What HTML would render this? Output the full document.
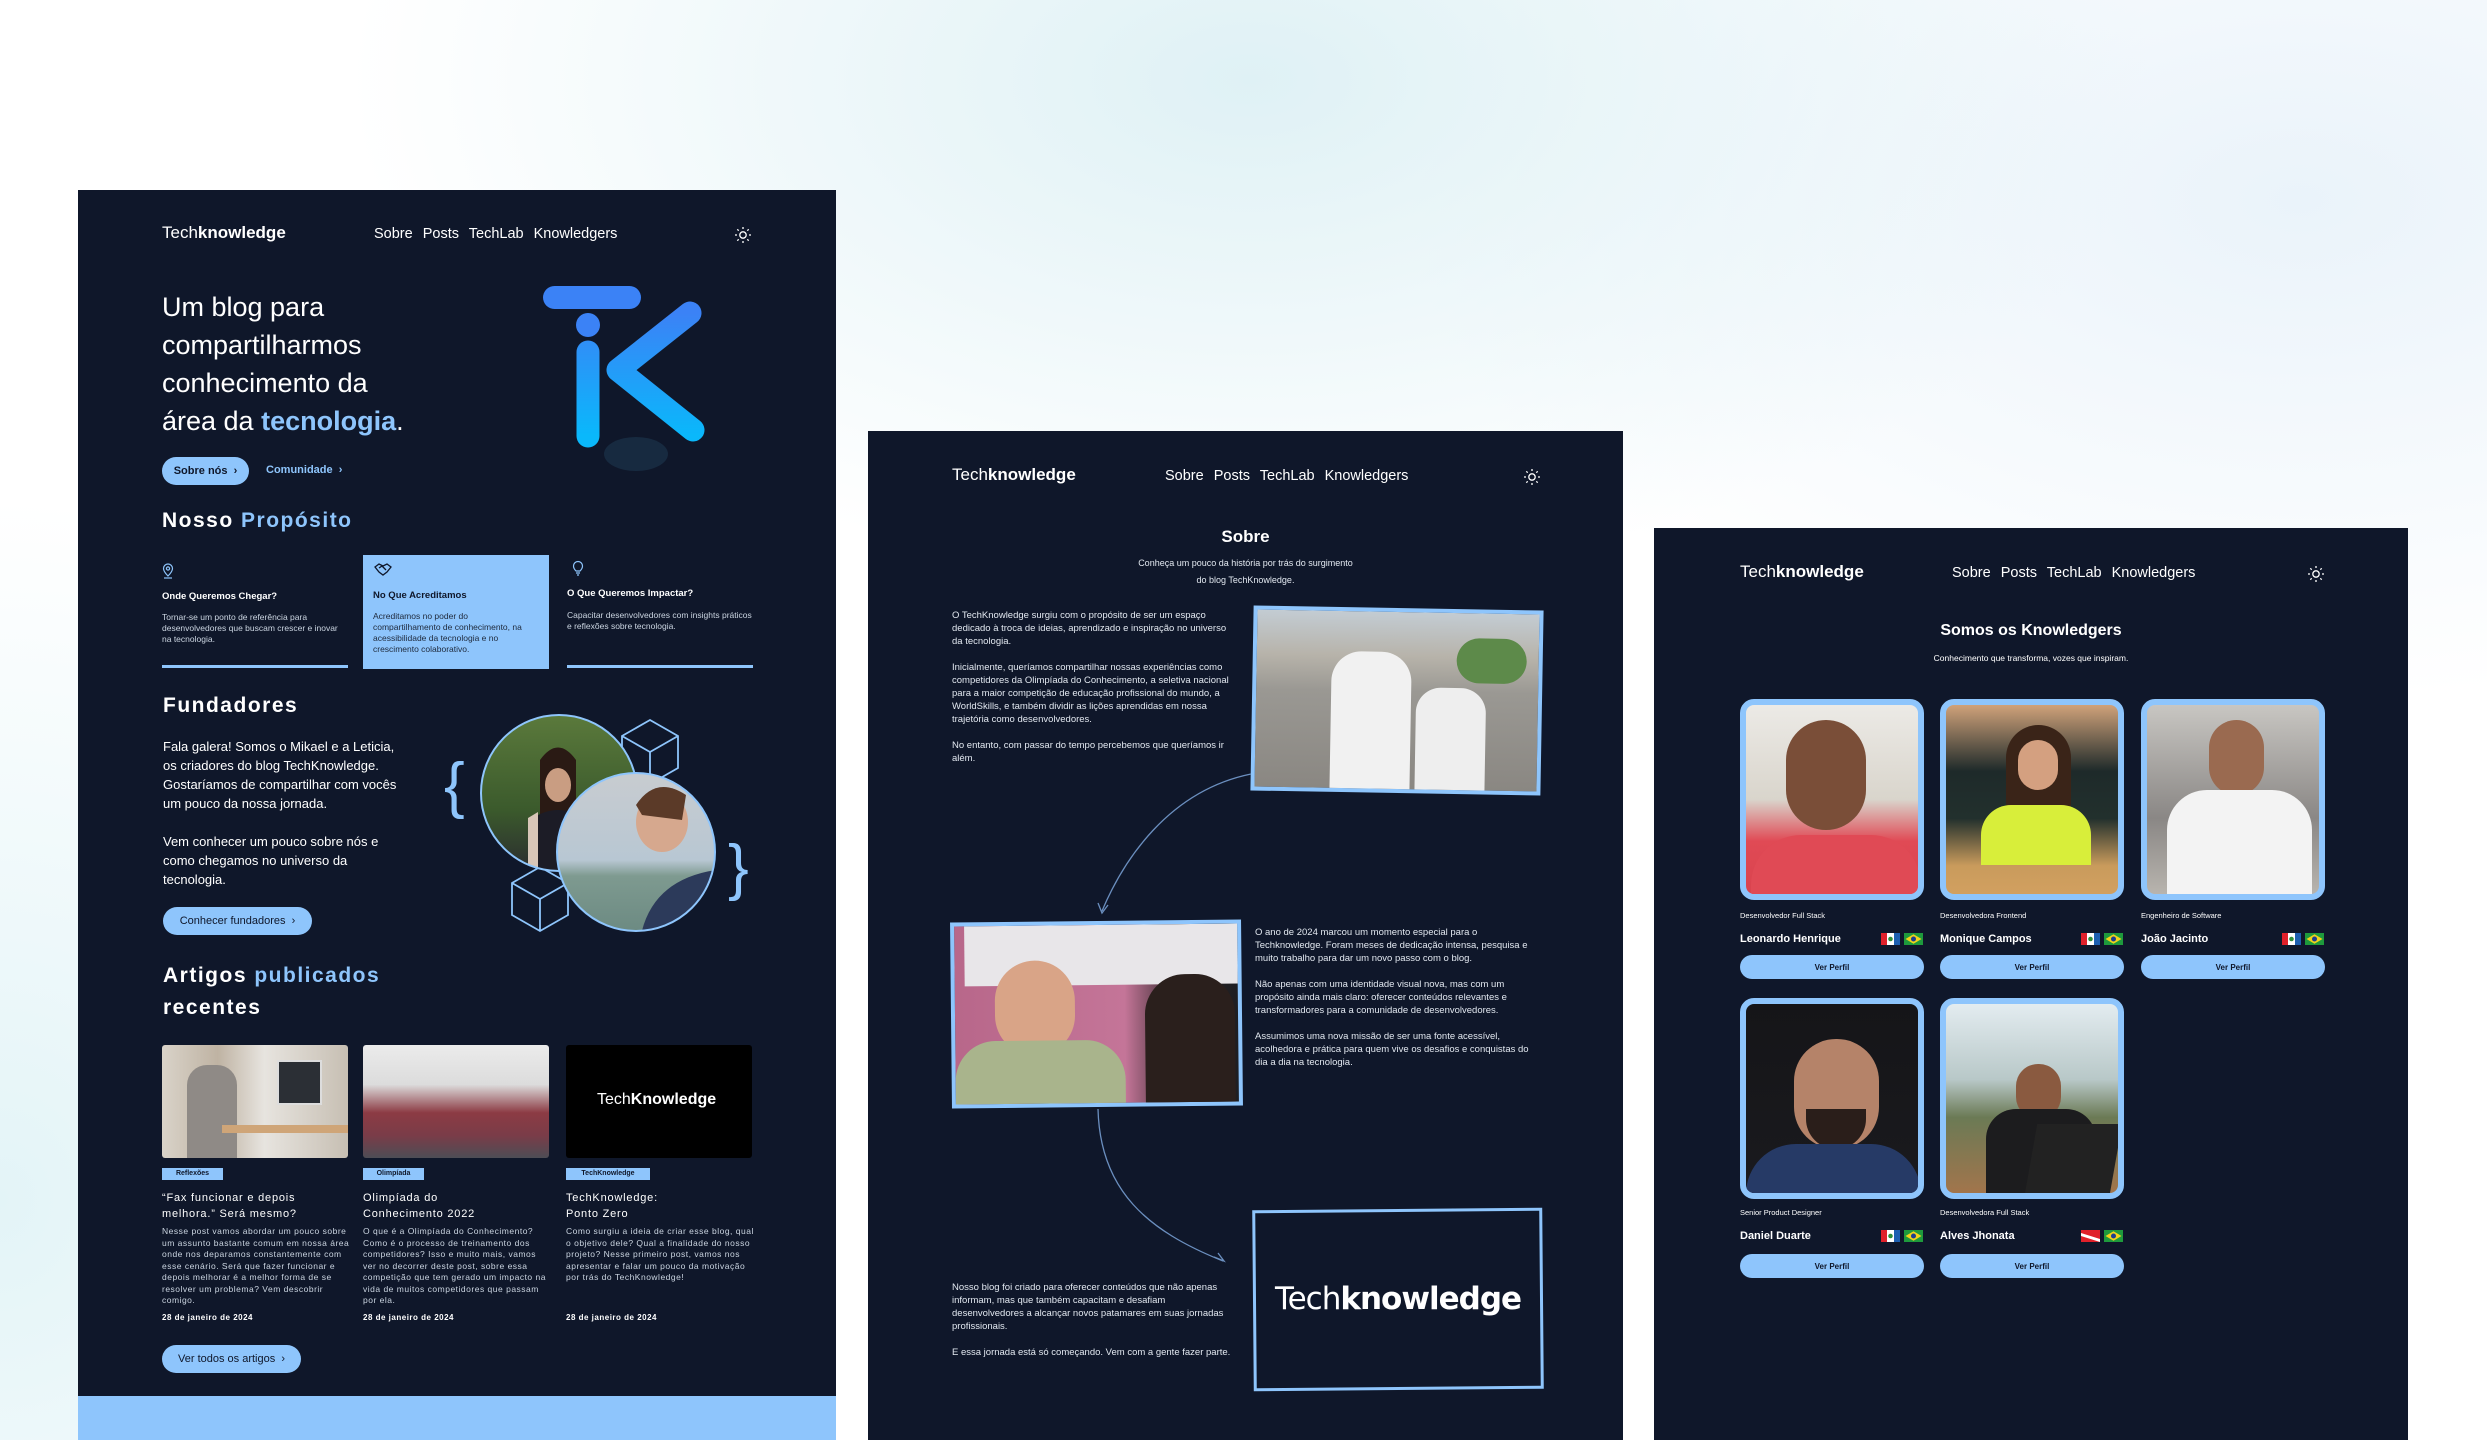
<!DOCTYPE html>
<html><head><meta charset="utf-8">
<style>
*{margin:0;padding:0;box-sizing:border-box}
body{width:2487px;height:1440px;overflow:hidden;position:relative;font-family:"Liberation Sans",sans-serif;
background:radial-gradient(ellipse 900px 500px at 1250px 80px,#dff1f5,rgba(223,241,245,0) 100%),radial-gradient(ellipse 600px 700px at 0px 1200px,#e3f4f7,rgba(227,244,247,0)),radial-gradient(ellipse 900px 500px at 2300px 200px,#eaf3fa,rgba(234,243,250,0)),#ffffff;}
.p{position:absolute;background:#0f172a;overflow:hidden}
.a{position:absolute;white-space:nowrap}
.w{color:#fff}
.b{color:#8ec5fc}
.logo{font-size:17px;color:#fff}
.logo b{font-weight:bold}
.nav{font-size:14.5px;color:#fff;word-spacing:6px}
.btn{position:absolute;background:#8ec5fc;color:#0f172a;border-radius:20px;font-size:11px;display:flex;align-items:center;justify-content:center}
.sm{font-size:8.5px;line-height:11px;color:#cbd5e1;white-space:normal}
.ph{position:absolute;overflow:hidden}
</style></head><body>

<!-- PANEL 1 -->
<div class="p" style="left:78px;top:190px;width:758px;height:1250px">
<div class="a logo" style="left:84px;top:33px">Tech<b>knowledge</b></div>
<div class="a nav" style="left:296px;top:36px">Sobre Posts TechLab Knowledgers</div>
<svg class="a" style="left:656px;top:36px" width="18" height="18" viewBox="0 0 18 18" fill="none" stroke="#fff" stroke-width="1.3"><circle cx="9" cy="9" r="3.2"/><path d="M9 1v2M9 15v2M1 9h2M15 9h2M3.3 3.3l1.4 1.4M13.3 13.3l1.4 1.4M3.3 14.7l1.4-1.4M13.3 4.7l1.4-1.4"/></svg>
<div class="a w" style="left:84px;top:98px;font-size:27px;line-height:38px;white-space:normal;width:255px">Um blog para compartilharmos conhecimento da área da <b class="b">tecnologia</b>.</div>
<div class="btn" style="left:84px;top:267px;width:87px;height:28px;font-weight:bold">Sobre nós &nbsp;›</div>
<div class="a b" style="left:188px;top:274px;font-size:11px;font-weight:bold">Comunidade &nbsp;›</div>
<div class="a w" style="left:84px;top:319px;font-size:21px;font-weight:bold;letter-spacing:1.5px">Nosso <span class="b">Propósito</span></div>
<!-- cards -->
<div class="a" style="left:285px;top:365px;width:186px;height:114px;background:#8ec5fc"></div>
<div class="a" style="left:84px;top:475px;width:186px;height:3px;background:#8ec5fc"></div>
<div class="a" style="left:489px;top:475px;width:186px;height:3px;background:#8ec5fc"></div>
<svg class="a" style="left:84px;top:373px" width="12" height="16" viewBox="0 0 12 16" fill="none" stroke="#8ec5fc" stroke-width="1.2"><path d="M6 13C2 9 1.5 7 1.5 5.5a4.5 4.5 0 019 0C10.5 7 10 9 6 13z"/><circle cx="6" cy="5.5" r="1.6"/><path d="M2 15h8"/></svg>
<svg class="a" style="left:296px;top:372px" width="18" height="14" viewBox="0 0 18 14" fill="none" stroke="#0f172a" stroke-width="1.3"><path d="M1 5l4-3 4 2 4-2 4 3-4 5-4 3-4-3z M5 6l3-2 4 4"/></svg>
<svg class="a" style="left:494px;top:370px" width="12" height="16" viewBox="0 0 12 16" fill="none" stroke="#8ec5fc" stroke-width="1.2"><path d="M4 11C2.5 9.5 1.5 8 1.5 6a4.5 4.5 0 019 0c0 2-1 3.5-2.5 5zM4 13h4M5 15h2"/></svg>
<div class="a w" style="left:84px;top:401px;font-size:9.5px;font-weight:bold">Onde Queremos Chegar?</div>
<div class="a sm" style="left:84px;top:422px;width:186px">Tornar-se um ponto de referência para desenvolvedores que buscam crescer e inovar na tecnologia.</div>
<div class="a" style="left:295px;top:400px;font-size:9.5px;font-weight:bold;color:#0f172a">No Que Acreditamos</div>
<div class="a sm" style="left:295px;top:421px;width:160px;color:#1e293b">Acreditamos no poder do compartilhamento de conhecimento, na acessibilidade da tecnologia e no crescimento colaborativo.</div>
<div class="a w" style="left:489px;top:398px;font-size:9.5px;font-weight:bold">O Que Queremos Impactar?</div>
<div class="a sm" style="left:489px;top:420px;width:190px">Capacitar desenvolvedores com insights práticos e reflexões sobre tecnologia.</div>
<div class="a w" style="left:85px;top:504px;font-size:21px;font-weight:bold;letter-spacing:1.5px">Fundadores</div>
<div class="a w" style="left:85px;top:547px;font-size:13px;line-height:19px;white-space:normal;width:245px">Fala galera! Somos o Mikael e a Leticia, os criadores do blog TechKnowledge. Gostaríamos de compartilhar com vocês um pouco da nossa jornada.<br><br>Vem conhecer um pouco sobre nós e como chegamos no universo da tecnologia.</div>
<div class="btn" style="left:85px;top:717px;width:149px;height:28px">Conhecer fundadores &nbsp;›</div>
<div class="a w" style="left:85px;top:770px;font-size:21px;font-weight:bold;letter-spacing:1.5px;line-height:32px">Artigos <span class="b">publicados</span><br>recentes</div>
<!-- articles -->
<div class="ph" style="left:84px;top:855px;width:186px;height:113px;border-radius:3px;background:linear-gradient(90deg,#d9d3c9 0%,#bfb3a3 30%,#e7e4df 55%,#c7bfb3 100%)"><div style="position:absolute;left:115px;top:15px;width:45px;height:45px;background:#2b2f35;border:2px solid #ddd"></div><div style="position:absolute;left:25px;top:20px;width:50px;height:93px;background:#8f8a86;border-radius:20px 20px 0 0"></div><div style="position:absolute;left:60px;top:80px;width:126px;height:8px;background:#cfa578"></div></div>
<div class="ph" style="left:285px;top:855px;width:186px;height:113px;border-radius:3px;background:linear-gradient(180deg,#ebebeb 0%,#dcdcdc 35%,#8c3b44 60%,#7a3c48 80%,#4d4d55 100%)"></div>
<div class="ph" style="left:488px;top:855px;width:186px;height:113px;border-radius:3px;background:#000"><div class="a w" style="left:31px;top:46px;font-size:16px">Tech<b>Knowledge</b></div></div>
<div class="a" style="left:84px;top:978px;width:61px;height:12px;background:#8ec5fc;font-size:7px;font-weight:bold;color:#0f172a;text-align:center;line-height:12px">Reflexões</div>
<div class="a" style="left:285px;top:978px;width:61px;height:12px;background:#8ec5fc;font-size:7px;font-weight:bold;color:#0f172a;text-align:center;line-height:12px">Olimpíada</div>
<div class="a" style="left:488px;top:978px;width:84px;height:12px;background:#8ec5fc;font-size:7px;font-weight:bold;color:#0f172a;text-align:center;line-height:12px">TechKnowledge</div>
<div class="a w" style="left:84px;top:1000px;font-size:11px;line-height:16px;letter-spacing:.8px">“Fax funcionar e depois<br>melhora.” Será mesmo?</div>
<div class="a w" style="left:285px;top:1000px;font-size:11px;line-height:16px;letter-spacing:.8px">Olimpíada do<br>Conhecimento 2022</div>
<div class="a w" style="left:488px;top:1000px;font-size:11px;line-height:16px;letter-spacing:.8px">TechKnowledge:<br>Ponto Zero</div>
<div class="a sm" style="left:84px;top:1036px;width:188px;line-height:11.5px;letter-spacing:.5px">Nesse post vamos abordar um pouco sobre um assunto bastante comum em nossa área onde nos deparamos constantemente com esse cenário. Será que fazer funcionar e depois melhorar é a melhor forma de se resolver um problema? Vem descobrir comigo.</div>
<div class="a sm" style="left:285px;top:1036px;width:188px;line-height:11.5px;letter-spacing:.5px">O que é a Olimpíada do Conhecimento? Como é o processo de treinamento dos competidores? Isso e muito mais, vamos ver no decorrer deste post, sobre essa competição que tem gerado um impacto na vida de muitos competidores que passam por ela.</div>
<div class="a sm" style="left:488px;top:1036px;width:190px;line-height:11.5px;letter-spacing:.5px">Como surgiu a ideia de criar esse blog, qual o objetivo dele? Qual a finalidade do nosso projeto? Nesse primeiro post, vamos nos apresentar e falar um pouco da motivação por trás do TechKnowledge!</div>
<div class="a w" style="left:84px;top:1123px;font-size:8px;font-weight:bold;letter-spacing:.5px">28 de janeiro de 2024</div>
<div class="a w" style="left:285px;top:1123px;font-size:8px;font-weight:bold;letter-spacing:.5px">28 de janeiro de 2024</div>
<div class="a w" style="left:488px;top:1123px;font-size:8px;font-weight:bold;letter-spacing:.5px">28 de janeiro de 2024</div>
<div class="btn" style="left:84px;top:1155px;width:139px;height:28px">Ver todos os artigos &nbsp;›</div>
<div class="a" style="left:0;top:1206px;width:758px;height:44px;background:#8ec5fc"></div>
</div>

<!-- TK logo + founders (page coords) -->
<svg class="a" style="left:0;top:0" width="840" height="1000">
<defs><linearGradient id="g" x1="0" y1="0" x2="0" y2="1"><stop offset="0" stop-color="#3b82f6"/><stop offset="1" stop-color="#0ab8fb"/></linearGradient>
<clipPath id="c1"><circle cx="559" cy="793" r="78"/></clipPath><clipPath id="c2"><circle cx="636" cy="852" r="79"/></clipPath>
<linearGradient id="f1" x1="0" y1="0" x2="0" y2="1"><stop offset="0" stop-color="#5b7a3c"/><stop offset=".6" stop-color="#3b5a2c"/><stop offset="1" stop-color="#2a2a30"/></linearGradient>
<linearGradient id="f2" x1="0" y1="0" x2="0" y2="1"><stop offset="0" stop-color="#c8ccd0"/><stop offset=".55" stop-color="#b8c7d3"/><stop offset=".65" stop-color="#7e9a90"/><stop offset="1" stop-color="#6c8a82"/></linearGradient></defs>
<ellipse cx="636" cy="454" rx="32" ry="17" fill="#172a40"/>
<rect x="543" y="286" width="98" height="23" rx="11.5" fill="#3b82f6"/>
<circle cx="588" cy="325" r="12" fill="#3b82f6"/>
<path d="M588 352V436M690 313L618 370L693 430" stroke="url(#g)" stroke-width="23" stroke-linecap="round" stroke-linejoin="round" fill="none"/>
<g fill="none" stroke="#8ec5fc" stroke-width="1.8">
<path d="M650 720l28 16v32l-28 16-28-16v-32zM622 736l28 16 28-16M650 752v32"/>
<path d="M540 867l28 16v32l-28 16-28-16v-32zM512 883l28 16 28-16M540 899v32"/>
</g>
<g clip-path="url(#c1)"><rect x="480" y="714" width="160" height="160" fill="url(#f1)"/><path d="M540 760q18-25 36 0v60h-36z" fill="#2a1a14"/><ellipse cx="558" cy="785" rx="13" ry="17" fill="#c99d82"/><path d="M530 880v-60q28-20 56 0v60z" fill="#1c1c26"/><path d="M528 880v-62l10-6v68z" fill="#d8c6b8"/></g>
<circle cx="559" cy="793" r="78" fill="none" stroke="#8ec5fc" stroke-width="2"/>
<g clip-path="url(#c2)"><rect x="556" y="772" width="160" height="160" fill="url(#f2)"/><ellipse cx="662" cy="822" rx="26" ry="30" fill="#d6a88e"/><path d="M636 805q20-30 50-10l-4 25-40 -5z" fill="#5b3a28"/><path d="M640 940q10-60 76-70v70z" fill="#2c3a5a"/></g>
<circle cx="636" cy="852" r="79" fill="none" stroke="#8ec5fc" stroke-width="2"/>
<text x="444" y="806" font-size="62" fill="#8ec5fc" font-family="Liberation Sans">{</text>
<text x="728" y="888" font-size="62" fill="#8ec5fc" font-family="Liberation Sans">}</text>
</svg>

<!-- PANEL 2 -->
<div class="p" style="left:868px;top:431px;width:755px;height:1009px">
<div class="a logo" style="left:84px;top:34px">Tech<b>knowledge</b></div>
<div class="a nav" style="left:297px;top:37px">Sobre Posts TechLab Knowledgers</div>
<svg class="a" style="left:655px;top:37px" width="18" height="18" viewBox="0 0 18 18" fill="none" stroke="#fff" stroke-width="1.3"><circle cx="9" cy="9" r="3.2"/><path d="M9 1v2M9 15v2M1 9h2M15 9h2M3.3 3.3l1.4 1.4M13.3 13.3l1.4 1.4M3.3 14.7l1.4-1.4M13.3 4.7l1.4-1.4"/></svg>
<div class="a w" style="left:0;width:755px;text-align:center;top:96px;font-size:17px;font-weight:bold">Sobre</div>
<div class="a" style="left:0;width:755px;text-align:center;top:124px;font-size:9px;line-height:17px;color:#e2e8f0">Conheça um pouco da história por trás do surgimento<br>do blog TechKnowledge.</div>
<div class="a sm" style="left:84px;top:178px;width:285px;font-size:9.5px;line-height:13px;color:#e2e8f0">O TechKnowledge surgiu com o propósito de ser um espaço dedicado à troca de ideias, aprendizado e inspiração no universo da tecnologia.<br><br>Inicialmente, queríamos compartilhar nossas experiências como competidores da Olimpíada do Conhecimento, a seletiva nacional para a maior competição de educação profissional do mundo, a WorldSkills, e também dividir as lições aprendidas em nossa trajetória como desenvolvedores.<br><br>No entanto, com passar do tempo percebemos que queríamos ir além.</div>
<div class="ph" style="left:384px;top:177px;width:290px;height:185px;border:4px solid #8ec5fc;transform:rotate(1deg);background:linear-gradient(180deg,#c3ccd3 0%,#b7b3aa 25%,#9a9893 45%,#8a8782 100%)"><div style="position:absolute;left:75px;top:40px;width:80px;height:140px;background:#f1f1f1;border-radius:30px 30px 0 0"></div><div style="position:absolute;left:160px;top:75px;width:70px;height:110px;background:#eeeeee;border-radius:25px 25px 0 0"></div><div style="position:absolute;left:200px;top:25px;width:70px;height:45px;background:#5d8a4a;border-radius:30px"></div></div>
<div class="a sm" style="left:387px;top:495px;width:285px;font-size:9.5px;line-height:13px;color:#e2e8f0">O ano de 2024 marcou um momento especial para o Techknowledge. Foram meses de dedicação intensa, pesquisa e muito trabalho para dar um novo passo com o blog.<br><br>Não apenas com uma identidade visual nova, mas com um propósito ainda mais claro: oferecer conteúdos relevantes e transformadores para a comunidade de desenvolvedores.<br><br>Assumimos uma nova missão de ser uma fonte acessível, acolhedora e prática para quem vive os desafios e conquistas do dia a dia na tecnologia.</div>
<div class="ph" style="left:83px;top:490px;width:291px;height:186px;border:4px solid #8ec5fc;transform:rotate(-0.6deg);background:linear-gradient(90deg,#b8678a 0%,#c47598 60%,#2a2426 80%,#1e1e22 100%)"><div style="position:absolute;left:10px;top:0;width:280px;height:60px;background:#e8e6e9"></div><div style="position:absolute;left:40px;top:35px;width:80px;height:95px;background:#d9a487;border-radius:40px"></div><div style="position:absolute;left:0;top:115px;width:170px;height:75px;background:#a9b48c;border-radius:40px 40px 0 0"></div><div style="position:absolute;left:190px;top:50px;width:90px;height:140px;background:#2a1f1c;border-radius:40px 40px 0 0"></div></div>
<svg class="a" style="left:0;top:0" width="755" height="1009" fill="none" stroke="#6b8fbf" stroke-width="1.3"><path d="M383 343C300 360 255 430 234 480"/><path d="M230 472l4 10 6-8"/><path d="M230 678C232 760 280 800 355 830"/><path d="M346 826l10 4-6 -8"/></svg>
<div class="a sm" style="left:84px;top:850px;width:285px;font-size:9.5px;line-height:13px;color:#e2e8f0">Nosso blog foi criado para oferecer conteúdos que não apenas informam, mas que também capacitam e desafiam desenvolvedores a alcançar novos patamares em suas jornadas profissionais.<br><br>E essa jornada está só começando. Vem com a gente fazer parte.</div>
<div class="a" style="left:385px;top:778px;width:290px;height:181px;border:3px solid #8ec5fc;transform:rotate(-0.5deg)"></div>
<div class="a w" style="left:385px;top:850px;width:290px;text-align:center;font-size:31px;font-family:'DejaVu Sans',sans-serif;letter-spacing:-1px">Tech<b>knowledge</b></div>
</div>

<!-- PANEL 3 -->
<div class="p" style="left:1654px;top:528px;width:754px;height:912px">
<div class="a logo" style="left:86px;top:34px">Tech<b>knowledge</b></div>
<div class="a nav" style="left:298px;top:37px">Sobre Posts TechLab Knowledgers</div>
<svg class="a" style="left:653px;top:37px" width="18" height="18" viewBox="0 0 18 18" fill="none" stroke="#fff" stroke-width="1.3"><circle cx="9" cy="9" r="3.2"/><path d="M9 1v2M9 15v2M1 9h2M15 9h2M3.3 3.3l1.4 1.4M13.3 13.3l1.4 1.4M3.3 14.7l1.4-1.4M13.3 4.7l1.4-1.4"/></svg>
<div class="a w" style="left:0;width:754px;text-align:center;top:94px;font-size:16px;font-weight:bold">Somos os Knowledgers</div>
<div class="a w" style="left:0;width:754px;text-align:center;top:125px;font-size:8.5px">Conhecimento que transforma, vozes que inspiram.</div>

<!-- row1 -->
<div class="ph" style="left:86px;top:171px;width:184px;height:201px;border:6px solid #8ec5fc;border-radius:14px;background:linear-gradient(180deg,#eceae6 0%,#d9d5cc 50%,#e04a55 72%,#d9434e 100%)"><div style="position:absolute;left:40px;top:15px;width:80px;height:110px;background:#7a4e38;border-radius:40px"></div><div style="position:absolute;left:5px;top:130px;width:170px;height:70px;background:#e04a55;border-radius:50px 50px 0 0"></div></div>
<div class="ph" style="left:286px;top:171px;width:184px;height:201px;border:6px solid #8ec5fc;border-radius:14px;background:linear-gradient(180deg,#d0a27a 0%,#1e2a2a 35%,#22302d 60%,#c99b5c 85%,#d2a060 100%)"><div style="position:absolute;left:60px;top:20px;width:65px;height:110px;background:#3a2418;border-radius:35px"></div><div style="position:absolute;left:72px;top:35px;width:40px;height:50px;background:#d4a080;border-radius:20px"></div><div style="position:absolute;left:35px;top:100px;width:110px;height:60px;background:#d8ee3a;border-radius:30px 30px 0 0"></div></div>
<div class="ph" style="left:487px;top:171px;width:184px;height:201px;border:6px solid #8ec5fc;border-radius:14px;background:linear-gradient(180deg,#c8c6c2 0%,#8a8785 60%,#b8b4ae 100%)"><div style="position:absolute;left:62px;top:15px;width:55px;height:75px;background:#9a6a50;border-radius:28px"></div><div style="position:absolute;left:20px;top:85px;width:145px;height:110px;background:#f3f3f3;border-radius:40px 40px 0 0"></div></div>
<div class="a w" style="left:86px;top:383px;font-size:7.5px">Desenvolvedor Full Stack</div>
<div class="a w" style="left:286px;top:383px;font-size:7.5px">Desenvolvedora Frontend</div>
<div class="a w" style="left:487px;top:383px;font-size:7.5px">Engenheiro de Software</div>
<div class="a w" style="left:86px;top:405px;font-size:11px;font-weight:bold">Leonardo Henrique</div>
<div class="a w" style="left:286px;top:405px;font-size:11px;font-weight:bold">Monique Campos</div>
<div class="a w" style="left:487px;top:405px;font-size:11px;font-weight:bold">João Jacinto</div>

<!-- row2 -->
<div class="ph" style="left:86px;top:470px;width:184px;height:201px;border:6px solid #8ec5fc;border-radius:14px;background:linear-gradient(180deg,#151518 0%,#1a1a1e 100%)"><div style="position:absolute;left:48px;top:35px;width:85px;height:110px;background:#b58369;border-radius:42px"></div><div style="position:absolute;left:60px;top:105px;width:60px;height:40px;background:#2a1e1a;border-radius:0 0 30px 30px"></div><div style="position:absolute;left:0px;top:140px;width:175px;height:60px;background:#263a66;border-radius:50px 50px 0 0"></div></div>
<div class="ph" style="left:286px;top:470px;width:184px;height:201px;border:6px solid #8ec5fc;border-radius:14px;background:linear-gradient(180deg,#e3ecf0 0%,#b8c8c8 40%,#6b7a55 60%,#a2754c 100%)"><div style="position:absolute;left:70px;top:60px;width:45px;height:55px;background:#8a5a40;border-radius:22px"></div><div style="position:absolute;left:40px;top:105px;width:110px;height:90px;background:#1c1c1e;border-radius:30px 30px 0 0"></div><div style="position:absolute;left:85px;top:120px;width:85px;height:70px;background:#222;transform:skewX(-10deg)"></div></div>
<div class="a w" style="left:86px;top:680px;font-size:7.5px">Senior Product Designer</div>
<div class="a w" style="left:286px;top:680px;font-size:7.5px">Desenvolvedora Full Stack</div>
<div class="a w" style="left:86px;top:702px;font-size:11px;font-weight:bold">Daniel Duarte</div>
<div class="a w" style="left:286px;top:702px;font-size:11px;font-weight:bold">Alves Jhonata</div>

<div class="btn" style="left:86px;top:427px;width:184px;height:24px;font-size:8px;font-weight:bold">Ver Perfil</div>
<div class="btn" style="left:286px;top:427px;width:184px;height:24px;font-size:8px;font-weight:bold">Ver Perfil</div>
<div class="btn" style="left:487px;top:427px;width:184px;height:24px;font-size:8px;font-weight:bold">Ver Perfil</div>
<div class="btn" style="left:86px;top:726px;width:184px;height:24px;font-size:8px;font-weight:bold">Ver Perfil</div>
<div class="btn" style="left:286px;top:726px;width:184px;height:24px;font-size:8px;font-weight:bold">Ver Perfil</div>

<!-- flags -->
<svg class="a" style="left:0;top:0" width="754" height="800">
<defs>
<g id="ce"><rect width="19" height="12" fill="#fff"/><rect width="6" height="12" fill="#e0202a"/><rect x="13" width="6" height="12" fill="#1d5fb0"/><circle cx="9.5" cy="6" r="2.3" fill="#2f8f3a"/></g>
<g id="br"><rect width="19" height="12" fill="#1e9a3c"/><path d="M9.5 1.3L17.5 6L9.5 10.7L1.5 6z" fill="#f2d21b"/><circle cx="9.5" cy="6" r="2.5" fill="#1c3f8f"/></g>
<g id="pa"><rect width="19" height="12" fill="#e0202a"/><path d="M0 3L19 9V12L0 6z" fill="#fff"/></g>
</defs>
<use href="#ce" x="227" y="405"/><use href="#br" x="250" y="405"/>
<use href="#ce" x="427" y="405"/><use href="#br" x="450" y="405"/>
<use href="#ce" x="628" y="405"/><use href="#br" x="651" y="405"/>
<use href="#ce" x="227" y="702"/><use href="#br" x="250" y="702"/>
<use href="#pa" x="427" y="702"/><use href="#br" x="450" y="702"/>
</svg>
</div>
</body></html>
